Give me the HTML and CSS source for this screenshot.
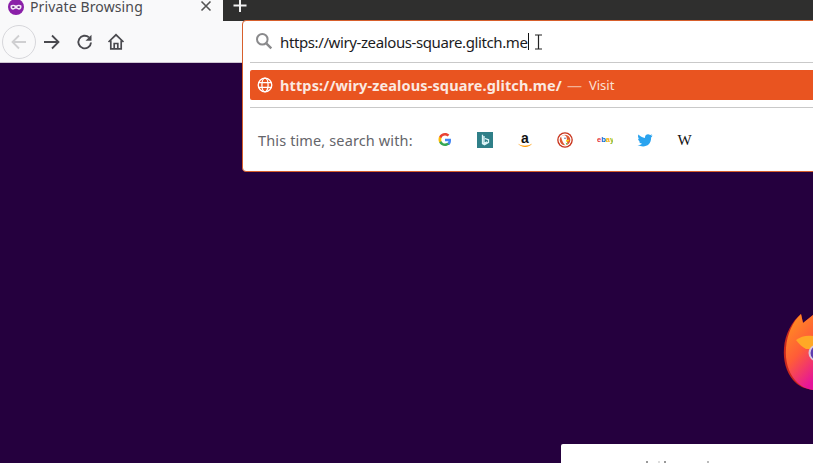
FILE: index.html
```html
<!DOCTYPE html>
<html lang="en">
<head>
<meta charset="utf-8">
<title>Private Browsing</title>
<link rel="stylesheet" href="styles.css">
</head>
<body>
<header class="chrome">
  <div class="tabbar">
    <div class="tab">
      <svg class="tab-icon" viewBox="0 0 16 16" width="16" height="16"><circle cx="8" cy="8" r="8" fill="#8a1fa8"/><path d="M2.600 6.600C4 5.400 6.500 5.600 8 6.600c1.500-1 4-1.200 5.400 0 .5 2-.3 4-2.200 4.100-1.400.1-2.200-1.200-3.200-1.200s-1.800 1.300-3.200 1.200C2.900 10.600 2.100 8.600 2.600 6.600z" fill="#f3e6f7"/><ellipse cx="5.300" cy="8.100" rx="1.300" ry=".9" fill="#5a1a78"/><ellipse cx="10.700" cy="8.100" rx="1.300" ry=".9" fill="#5a1a78"/></svg>
      <span class="tab-title">Private Browsing</span>
      <svg class="tab-close" viewBox="0 0 12 12" width="12" height="12"><path d="M1.500 1.500l9 9M10.500 1.500l-9 9" stroke="#555" stroke-width="1.600" fill="none"/></svg>
    </div>
    <div class="tab-rest">
      <svg class="new-tab" viewBox="0 0 14 14" width="14" height="14"><path d="M7 0v13M.5 6.500h13" stroke="#f2f2f2" stroke-width="2" fill="none"/></svg>
    </div>
  </div>
  <nav class="toolbar">
    <span class="back">
      <svg viewBox="0 0 18 18" width="18" height="18"><path d="M16 9H2.500M9 2.500L2.500 9 9 15.500" stroke="#cfcfd1" stroke-width="1.800" fill="none"/></svg>
    </span>
    <svg class="tool forward" viewBox="0 0 18 18" width="18" height="18"><path d="M1 9h14.500M9 2.500L15.500 9 9 15.500" stroke="#4a4a4f" stroke-width="1.800" fill="none"/></svg>
    <svg class="tool reload" viewBox="0 0 18 18" width="18" height="18"><path d="M15 9.500A6.300 6.300 0 1 1 13 4.400" stroke="#4a4a4f" stroke-width="1.900" fill="none"/><path d="M15.500 1.800v6h-6z" fill="#4a4a4f"/></svg>
    <svg class="tool home" viewBox="0 0 18 18" width="18" height="18"><path d="M1.500 9L9 1.800 16.500 9M3.800 7.500V15.800h10.400V7.500" stroke="#4a4a4f" stroke-width="1.700" fill="none"/><path d="M7.200 15.800V10.500h3.600v5.300" stroke="#4a4a4f" stroke-width="1.700" fill="none"/></svg>
  </nav>
</header>
<main class="page">
  <svg class="fx-logo" viewBox="0 0 30 84" width="30" height="84">
    <defs>
      <linearGradient id="fx" x1="0.300" y1="0" x2="0.700" y2="1">
        <stop offset="0" stop-color="#ff8f1f"/>
        <stop offset=".5" stop-color="#ff5c38"/>
        <stop offset="1" stop-color="#e5149a"/>
      </linearGradient>
    </defs>
    <path d="M18 4l2 9 10-8v75C22 79 15 76 10 70 3 62 0 50 1 38 2 24 9 11 18 4z" fill="#c9281e"/>
    <path d="M18 4l2 9 10-8v75C23 79 17 76 12 70 5 62 2 50 3 38 4 24 10 11 18 4z" fill="url(#fx)"/>
    <path d="M13 30c5-4 11-5 17-4v13H23c-4-2-7-5-10-9z" fill="#ffa826"/>
    <circle cx="34" cy="43" r="8.500" fill="#d9c6dc"/>
    <circle cx="35" cy="43" r="7.500" fill="#5d3bb0"/>
  </svg>
  <div class="card">
    <span class="mark mark-a"></span>
    <span class="mark mark-b"></span>
    <span class="mark mark-c"></span>
    <span class="mark mark-d"></span>
  </div>
</main>
<section class="urlbar-popup">
  <div class="input-row">
    <svg class="search-icon" viewBox="0 0 18 18" width="18" height="18"><circle cx="7.300" cy="7.300" r="5.300" stroke="#8a8a8c" stroke-width="2" fill="none"/><path d="M11.300 11.300l5 5" stroke="#8a8a8c" stroke-width="2.400" fill="none"/></svg>
    <span class="url-text">https://wiry-zealous-square.glitch.me</span><span class="caret"></span>
    <svg class="ibeam" viewBox="0 0 9 16" width="9" height="16"><path d="M1 1h7M1 15h7M4.500 1v14" stroke="#222" stroke-width="1.200" fill="none"/></svg>
  </div>
  <div class="result-wrap">
    <div class="result">
      <svg class="globe" viewBox="0 0 16 16" width="16" height="16"><g stroke="#fff" stroke-width="1.300" fill="none"><circle cx="8" cy="8" r="6.800"/><ellipse cx="8" cy="8" rx="3.100" ry="6.800"/><path d="M1.500 5.700h13M1.500 10.300h13"/></g></svg>
      <span class="result-url">https://wiry-zealous-square.glitch.me/</span>
      <span class="result-dash">—</span>
      <span class="result-action">Visit</span>
    </div>
  </div>
  <div class="engines">
    <span class="engines-label">This time, search with:</span>
    <div class="engine-list">
      <svg viewBox="0 0 16 16" width="16" height="16"><path d="M14 8.200c0-.5 0-.9-.1-1.400H8v2.500h3.500c-.2.800-.6 1.500-1.300 2v1.700h2.100c1.200-1.200 1.700-2.800 1.700-4.800z" fill="#4285f4"/><path d="M8 14c1.700 0 3.100-.6 4.300-1.500l-2.100-1.700c-.6.400-1.300.7-2.200.7-1.700 0-3.100-1.100-3.600-2.600H2.200v1.700C3.300 12.800 5.500 14 8 14z" fill="#34a853"/><path d="M4.400 8.900C4.200 8 4.200 7.200 4.400 6.300V4.600H2.200C1.300 6.200 1.300 8.900 2.200 10.600z" fill="#fbbc05"/><path d="M8 3.600c.9 0 1.800.3 2.500 1l1.900-1.900C11.200 1.600 9.700 1 8 1 5.500 1 3.300 2.300 2.200 4.600l2.200 1.700C4.900 4.700 6.300 3.600 8 3.600z" fill="#ea4335"/></svg>
      <svg viewBox="0 0 16 16" width="16" height="16"><rect width="16" height="16" fill="#2f7f88"/><path d="M5.500 2.800v8.900l2 1 4-2.400V7.800L8 6.500M7 4v7.500l3-1.800" stroke="#dff5f8" stroke-width="1.300" fill="none"/></svg>
      <svg class="amazon" viewBox="0 0 16 16" width="16" height="16"><text x="8" y="10.500" class="amazon-a">a</text><path d="M.8 11.500c4 3 10 3 14.400 0-3 4.500-11 4.500-14.400 0z" fill="#f90"/></svg>
      <svg viewBox="0 0 16 16" width="16" height="16"><circle cx="8" cy="8" r="7.800" fill="#c8321a"/><circle cx="8" cy="8" r="6.500" fill="#fff"/><circle cx="8" cy="8" r="5.300" fill="#de5833"/><path d="M4 4.300C6 2.600 9 3 9.500 5c.6 2 .2 3.500.9 6.500l-.7 2C7 13.500 5 9 4 4.300z" fill="#fff"/><path d="M9 8.300l3.300-.8-.5 1.700-2.800.6z" fill="#fdd20a"/><path d="M8.700 10.800l2.200.8-1.500 1.400z" fill="#65bc46"/><circle cx="8" cy="6.200" r=".7" fill="#2d4f8e"/></svg>
      <svg class="ebay" viewBox="0 0 16 16" width="16" height="16"><text x="0" y="10" class="ebay-text"><tspan fill="#e53238">e</tspan><tspan fill="#0064d2">b</tspan><tspan fill="#f5af02">a</tspan><tspan fill="#86b817">y</tspan></text></svg>
      <svg viewBox="0 0 16 16" width="16" height="16"><path d="M15.500 3.500c-.6.300-1.200.4-1.800.5.700-.4 1.100-1 1.400-1.700-.6.400-1.300.6-2 .8C11.400 1.200 8 2.400 8 5.200v.7C5.400 5.800 3.100 4.500 1.500 2.600.6 4 1 5.900 2.400 6.800c-.5 0-1-.1-1.400-.4 0 1.500 1.100 2.800 2.500 3.100-.5.100-.9.100-1.400 0 .4 1.300 1.600 2.100 3 2.200-1.300 1-3 1.500-4.600 1.300C7.800 16.600 14.400 13 14.100 5.500c.6-.5 1-1.100 1.400-2z" fill="#2aa3ef"/></svg>
      <span class="wiki">W</span>
    </div>
  </div>
</section>
</body>
</html>
```
FILE: styles.css
```css
* { box-sizing: border-box; }
html, body { margin: 0; height: 100%; }
body {
  position: relative;
  width: 813px;
  height: 463px;
  overflow: hidden;
  display: flex;
  flex-direction: column;
  font-family: "Noto Sans", "Open Sans", sans-serif;
  background: #25003e;
}
.chrome { flex: none; }
.tabbar { display: flex; height: 21px; }
.tab {
  width: 223px;
  background: #f9f9fa;
  display: flex;
  align-items: flex-start;
  padding: 0 11px 0 8px;
  overflow: hidden;
}
.tab-icon { flex: none; margin-top: -1px; }
.tab-title {
  flex: 1;
  margin-left: 6px;
  font-size: 14px;
  line-height: 13px;
  letter-spacing: 0.13px;
  color: #4a4a4f;
}
.tab-close { flex: none; }
.tab-rest { flex: 1; background: #2f2f2e; padding-left: 10px; }
.new-tab { display: block; margin-top: -1px; }
.toolbar {
  height: 42px;
  background: #f9f9fa;
  border-bottom: 1px solid #cfc6d2;
  display: flex;
  align-items: center;
  padding-left: 2px;
}
.back {
  width: 34px;
  height: 34px;
  border: 1px solid #d7d7db;
  border-radius: 50%;
  display: flex;
  align-items: center;
  justify-content: center;
}
.tool { flex: none; }
.forward { margin-left: 7px; }
.reload { margin-left: 15px; }
.home { margin-left: 13px; }
.page { flex: 1; position: relative; background: #25003e; }
.fx-logo { position: absolute; left: 783px; top: 247px; }
.card {
  position: absolute;
  left: 561px;
  top: 381px;
  width: 260px;
  height: 30px;
  background: #fff;
  border-radius: 2px;
  overflow: hidden;
  display: flex;
  align-items: flex-start;
  padding: 17px 0 0 85px;
}
.mark { width: 2px; height: 2px; background: #999; flex: none; }
.mark-b { margin-left: 10px; background: #ddd; }
.mark-c { margin-left: 4px; }
.mark-d { margin-left: 41px; background: #bbb; }
.urlbar-popup {
  position: absolute;
  left: 242px;
  top: 20px;
  width: 600px;
  height: 152px;
  background: #fff;
  border: 1px solid #d75f2c;
  border-radius: 4px;
  padding-left: 7px;
}
.input-row {
  height: 42px;
  display: flex;
  align-items: center;
  padding-left: 5px;
  border-bottom: 1px solid #c9c9c9;
}
.search-icon { flex: none; margin-top: -2px; }
.url-text {
  margin-left: 7px;
  font-size: 15px;
  line-height: 20px;
  letter-spacing: -0.39px;
  color: #1c1c1e;
}
.caret { width: 1px; height: 17px; background: #111; }
.ibeam { margin-left: 5px; margin-top: 1px; }
.result-wrap {
  height: 45px;
  padding-top: 7px;
  border-bottom: 1px solid #c9c9c9;
}
.result {
  height: 30px;
  background: #e95420;
  border-radius: 2px 0 0 2px;
  display: flex;
  align-items: center;
  padding-left: 7px;
  color: #fff;
}
.globe { flex: none; }
.result-url {
  margin-left: 7px;
  font-size: 14.500px;
  font-weight: 700;
  letter-spacing: 0.12px;
  color: #fbe9e1;
}
.result-dash { margin-left: 5px; font-size: 15px; line-height: 16px; color: #f3b094; }
.result-action { margin-left: 7px; font-size: 13px; color: #fbe0d4; }
.engines {
  display: flex;
  align-items: center;
  height: 63px;
  padding-left: 8px;
}
.engines-label { font-size: 14.500px; color: #65656a; letter-spacing: 0.13px; }
.engine-list {
  display: flex;
  align-items: center;
  gap: 24px;
  margin-left: 24px;
}
.engine-list svg { display: block; flex: none; }
.amazon-a { font-family: "Liberation Sans", sans-serif; font-size: 14px; font-weight: 700; text-anchor: middle; fill: #111; }
.ebay-text { font-family: "Liberation Sans", sans-serif; font-size: 7.500px; font-weight: 700; }
.wiki { width: 16px; text-align: center; font-family: "Liberation Serif", serif; font-size: 15px; line-height: 16px; color: #111; }
```
